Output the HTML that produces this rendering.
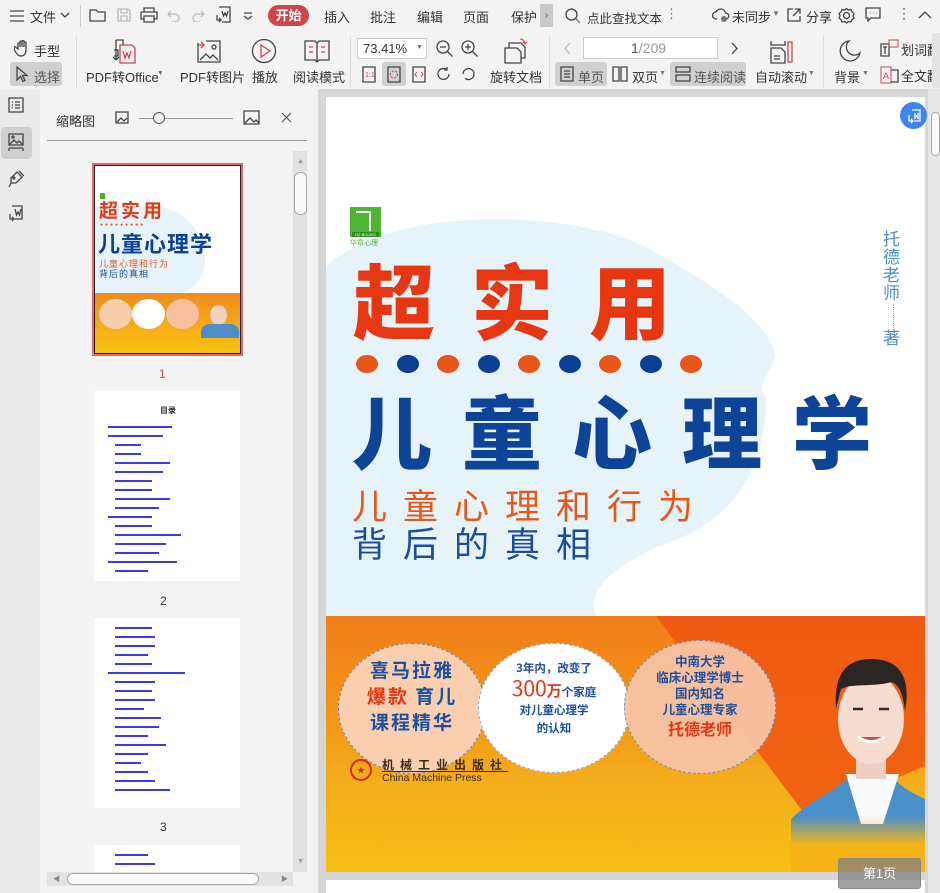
<!DOCTYPE html>
<html><head><meta charset="utf-8">
<style>
*{margin:0;padding:0;box-sizing:border-box}
body{width:940px;height:893px;overflow:hidden;background:#f3f3f3;font-family:"Liberation Sans","Noto Sans CJK SC",sans-serif;font-size:12px;color:#333;position:relative}
.a{position:absolute}
.t{white-space:nowrap}
.cjk{font-family:"Noto Sans CJK SC",sans-serif}
.ic{stroke:#444;fill:none;stroke-width:1.3}
.toc{position:absolute;height:2px;background:#3a3ae8}
</style></head><body>

<!-- top bar -->
<div class="a" style="left:0;top:0;width:940px;height:33px;background:#f3f3f3"></div>
<svg class="a" style="left:9px;top:9px" width="16" height="14"><path class="ic" d="M1 2h14M1 7h14M1 12h14"/></svg>
<div class="a t" style="left:30px;top:7px;font-size:13px">文件</div>
<svg class="a" style="left:60px;top:11px" width="10" height="8"><path class="ic" d="M1 2l4 4 4-4"/></svg>
<div class="a" style="left:80px;top:5px;width:1px;height:22px;background:#ccc"></div>
<svg class="a" style="left:89px;top:7px" width="18" height="16"><path class="ic" d="M1 3h6l2 2h7v9H1z"/></svg>
<svg class="a" style="left:116px;top:7px" width="16" height="16"><path d="M2 2h10l2 2v10H2z M5 2v4h6V2 M5 14V9h6v5" stroke="#bbb" fill="none" stroke-width="1.3"/></svg>
<svg class="a" style="left:140px;top:7px" width="18" height="16"><path class="ic" d="M4 5V1h10v4 M1 5h16v7h-3 M4 12H1V5 M4 9h10v6H4z"/></svg>
<svg class="a" style="left:167px;top:8px" width="14" height="14"><path d="M4 3L1 6l3 3 M1 6h7a4 4 0 010 8H5" stroke="#bbb" fill="none" stroke-width="1.3"/></svg>
<svg class="a" style="left:191px;top:8px" width="14" height="14"><path d="M10 3l3 3-3 3 M13 6H6a4 4 0 000 8h3" stroke="#bbb" fill="none" stroke-width="1.3"/></svg>
<svg class="a" style="left:214px;top:6px" width="18" height="18"><path class="ic" d="M5 1h11v15H8 M3 9v5h4 M5 12l2 2-2 2 M8 5l1.5 5 1.5-3 1.5 3L14 5"/></svg>
<svg class="a" style="left:243px;top:12px" width="10" height="8"><path class="ic" d="M1 1h8M1 4l4 3 4-3"/></svg>
<div class="a t" style="left:268px;top:5px;width:41px;height:21px;background:#d0454a;border-radius:11px;color:#fff;font-size:13px;text-align:center;line-height:21px;font-weight:bold">开始</div>
<div class="a t" style="left:324px;top:7px;font-size:13px">插入</div>
<div class="a t" style="left:370px;top:7px;font-size:13px">批注</div>
<div class="a t" style="left:417px;top:7px;font-size:13px">编辑</div>
<div class="a t" style="left:463px;top:7px;font-size:13px">页面</div>
<div class="a t" style="left:511px;top:7px;font-size:13px">保护</div>
<div class="a" style="left:540px;top:4px;width:13px;height:23px;background:#c8c8c8;color:#555;font-size:10px;text-align:center;line-height:23px">›</div>
<svg class="a" style="left:565px;top:8px" width="16" height="16"><circle class="ic" cx="6.5" cy="6.5" r="5.5" stroke="#777"/><path d="M10.5 10.5l4.5 4.5" stroke="#777" stroke-width="1.3"/></svg>
<div class="a t" style="left:587px;top:8px;font-size:12.5px">点此查找文本</div>
<div class="a t" style="left:665px;top:6px;font-size:13px;color:#666">⋮</div>
<svg class="a" style="left:712px;top:7px" width="18" height="16"><path class="ic" d="M5 12H4a3.5 3.5 0 010-7 5 5 0 019.5 1A3 3 0 0114 12" stroke="#555"/><circle cx="12" cy="12" r="3" fill="#777"/></svg>
<div class="a t" style="left:732px;top:7px;font-size:13px">未同步</div>
<div class="a t" style="left:772px;top:9px;font-size:8px;color:#777">▼</div>
<svg class="a" style="left:786px;top:7px" width="16" height="16"><path class="ic" d="M7 2H2v12h12V9 M9 2h5v5 M14 2L7 9"/></svg>
<div class="a t" style="left:806px;top:7px;font-size:13px">分享</div>
<svg class="a" style="left:838px;top:7px" width="17" height="17"><circle class="ic" cx="8.5" cy="8.5" r="3"/><path class="ic" d="M8.5 1.5l2 1.5 2.5-.5 1 2.5 2 1.5-1 2.5 1 2-2 1.5-1 2.5-2.5-.5-2 1.5-2-1.5-2.5.5-1-2.5-2-1.5 1-2-1-2.5 2-1.5 1-2.5 2.5.5z"/></svg>
<svg class="a" style="left:865px;top:7px" width="16" height="15"><path class="ic" d="M1 1h14v10H6l-3 3v-3H1z M5 6h.5M8 6h.5M11 6h.5"/></svg>
<div class="a t" style="left:897px;top:5px;font-size:14px;color:#555">⋮</div>
<svg class="a" style="left:918px;top:10px" width="14" height="9"><path class="ic" d="M1 8l6-6 6 6"/></svg>

<!-- toolbar row 2 -->
<svg class="a" style="left:14px;top:39px" width="18" height="18"><path class="ic" d="M4 10V5a1 1 0 012 0v3V3a1 1 0 012 0v5V2.5a1 1 0 012 0V8V4a1 1 0 012 0v7c0 4-2 6-5 6s-4-2-6-5l-1-3a1 1 0 012-.5z"/></svg>
<div class="a t" style="left:34px;top:41px;font-size:13px">手型</div>
<div class="a" style="left:10px;top:62px;width:52px;height:24px;background:#d0d0d0;border-radius:3px"></div>
<svg class="a" style="left:15px;top:66px" width="14" height="17"><path class="ic" d="M2 1v13l3.5-3.5 2.5 5 2-1-2.5-5H12z"/></svg>
<div class="a t" style="left:34px;top:67px;font-size:13px;color:#555">选择</div>
<div class="a" style="left:76px;top:36px;width:1px;height:52px;background:#ddd"></div>
<svg class="a" style="left:110px;top:38px" width="28" height="28"><path class="ic" d="M6 2h7v5 M6 2v20 M4 12h4v6H4 M3 19l3 3 3-3"/><path d="M10 7h12l3 3v15H10z M13 13l2 7 2-5 2 5 2-7" stroke="#d0454a" fill="none" stroke-width="1.3"/></svg>
<div class="a t" style="left:86px;top:67px;font-size:13px">PDF转Office</div>
<div class="a t" style="left:157px;top:70px;font-size:7px;color:#777">▼</div>
<svg class="a" style="left:196px;top:39px" width="26" height="24"><path class="ic" d="M2 4v19h22V2H10 M4 21l6-6 4 4 3-3 5 5"/><circle class="ic" cx="18" cy="8" r="2"/><path d="M1 6h7M5 3l3 3-3 3" stroke="#d0454a" fill="none" stroke-width="1.3"/></svg>
<div class="a t" style="left:180px;top:67px;font-size:13px">PDF转图片</div>
<svg class="a" style="left:251px;top:38px" width="26" height="26"><circle class="ic" cx="13" cy="13" r="11.5"/><path d="M10 7v12l9-6z" stroke="#d0454a" fill="none" stroke-width="1.3"/></svg>
<div class="a t" style="left:252px;top:67px;font-size:13px">播放</div>
<svg class="a" style="left:304px;top:39px" width="26" height="24"><path class="ic" d="M1 2h10l2 2 2-2h10v19H15l-2 2-2-2H1z M13 4v18"/><path d="M5 8h4M5 13h4M17 8h4M17 13h4" stroke="#d0454a" stroke-width="1.3"/></svg>
<div class="a t" style="left:293px;top:67px;font-size:13px">阅读模式</div>
<div class="a" style="left:350px;top:36px;width:1px;height:52px;background:#ddd"></div>
<div class="a" style="left:357px;top:38px;width:70px;height:21px;background:#fff;border:1px solid #ccc;border-radius:2px"></div>
<div class="a t" style="left:363px;top:41px;font-size:13px">73.41%</div>
<div class="a t" style="left:416px;top:44px;font-size:7px;color:#777">▼</div>
<svg class="a" style="left:436px;top:40px" width="18" height="18"><circle class="ic" cx="7" cy="7" r="6"/><path class="ic" d="M4 7h6M11.5 11.5l5 5"/></svg>
<svg class="a" style="left:461px;top:40px" width="18" height="18"><circle class="ic" cx="7" cy="7" r="6"/><path class="ic" d="M4 7h6M7 4v6M11.5 11.5l5 5"/></svg>
<svg class="a" style="left:362px;top:66px" width="14" height="17"><path class="ic" d="M1 1h12v15H1z"/><text x="3" y="11" font-size="7" fill="#d0454a">1:1</text></svg>
<div class="a" style="left:382px;top:62px;width:24px;height:24px;background:#d0d0d0;border-radius:3px"></div>
<svg class="a" style="left:387px;top:66px" width="14" height="17"><path class="ic" d="M1 1h12v15H1z"/><circle cx="7" cy="8.5" r="3.5" stroke="#d0454a" fill="none" stroke-dasharray="2 1.5"/></svg>
<svg class="a" style="left:412px;top:66px" width="14" height="17"><path class="ic" d="M1 1h12v15H1z"/><path d="M5 6L3 8.5 5 11M9 6l2 2.5L9 11" stroke="#d0454a" fill="none"/></svg>
<svg class="a" style="left:436px;top:66px" width="16" height="16"><path class="ic" d="M13 8a5.5 5.5 0 11-2-4.3 M11 1v3h-3"/></svg>
<svg class="a" style="left:460px;top:66px" width="16" height="16"><path class="ic" d="M3 8a5.5 5.5 0 112 4.3"/></svg>
<svg class="a" style="left:502px;top:38px" width="26" height="26"><path class="ic" d="M3 10h12l4 4v11H3z M7 10V5h12l4 4v11h-4"/><path d="M18 1a5 5 0 015 5 M21 4l2 2 2-2" stroke="#d0454a" fill="none"/></svg>
<div class="a t" style="left:490px;top:67px;font-size:13px">旋转文档</div>
<div class="a" style="left:549px;top:36px;width:1px;height:52px;background:#ddd"></div>
<svg class="a" style="left:563px;top:42px" width="9" height="13"><path d="M7 1L2 6.5 7 12" stroke="#bbb" fill="none" stroke-width="1.3"/></svg>
<div class="a" style="left:583px;top:37px;width:135px;height:22px;background:#fff;border:1px solid #ccc"></div>
<div class="a t" style="left:631px;top:40px;font-size:14px;color:#999"><span style="color:#555">1</span>/209</div>
<svg class="a" style="left:730px;top:42px" width="9" height="13"><path d="M2 1l5 5.5L2 12" stroke="#444" fill="none" stroke-width="1.3"/></svg>
<div class="a" style="left:555px;top:62px;width:52px;height:24px;background:#d0d0d0;border-radius:3px"></div>
<svg class="a" style="left:560px;top:66px" width="14" height="16"><path class="ic" d="M1 1h12v14H1z M4 5h6M4 8h6M4 11h6"/></svg>
<div class="a t" style="left:578px;top:67px;font-size:13px;color:#555">单页</div>
<svg class="a" style="left:612px;top:66px" width="16" height="16"><path class="ic" d="M1 1h6v14H1z M9 1h6v14H9z"/></svg>
<div class="a t" style="left:632px;top:67px;font-size:13px">双页</div>
<div class="a t" style="left:659px;top:70px;font-size:7px;color:#777">▼</div>
<div class="a" style="left:670px;top:62px;width:76px;height:24px;background:#d0d0d0;border-radius:3px"></div>
<svg class="a" style="left:675px;top:66px" width="16" height="16"><path class="ic" d="M1 1h14v5H1z M1 9h14v6H1z"/></svg>
<div class="a t" style="left:694px;top:67px;font-size:13px;color:#555">连续阅读</div>
<svg class="a" style="left:770px;top:40px" width="24" height="24"><path class="ic" d="M1 1v4h14V1 M1 8v15h14V12l-4-4z M4 16h6M4 19h6"/><rect x="18" y="2" width="4" height="20" stroke="#d0454a" fill="none" stroke-width="1.3"/></svg>
<div class="a t" style="left:755px;top:67px;font-size:13px">自动滚动</div>
<div class="a t" style="left:808px;top:70px;font-size:7px;color:#777">▼</div>
<div class="a" style="left:823px;top:36px;width:1px;height:52px;background:#ddd"></div>
<svg class="a" style="left:839px;top:40px" width="22" height="22"><path class="ic" d="M10 1a10 10 0 1011 12A8 8 0 0110 1z"/></svg>
<div class="a t" style="left:834px;top:67px;font-size:13px">背景</div>
<div class="a t" style="left:862px;top:70px;font-size:7px;color:#777">▼</div>
<svg class="a" style="left:880px;top:39px" width="20" height="18"><path class="ic" d="M1 5h8v12H1z M3 8h4M5 8v7"/><rect x="9" y="1" width="9" height="7" stroke="#d0454a" fill="none"/></svg>
<div class="a t" style="left:901px;top:40px;font-size:13px">划词翻</div>
<svg class="a" style="left:880px;top:66px" width="20" height="18"><rect x="1" y="1" width="10" height="16" stroke="#d0454a" fill="none"/><text x="3" y="13" font-size="9" fill="#d0454a">A</text><path class="ic" d="M11 4h7v12h-7"/></svg>
<div class="a t" style="left:901px;top:66px;font-size:13px">全文翻</div>
<div class="a" style="left:932px;top:33px;width:8px;height:55px;background:#e3e3e3"></div>

<!-- left icon strip -->
<div class="a" style="left:0;top:89px;width:40px;height:804px;background:#ebebeb"></div>
<svg class="a" style="left:8px;top:97px" width="16" height="16"><path class="ic" d="M1 1h14v14H1z M4 5h1M7 5h5M4 8h1M7 8h5M4 11h1M7 11h5"/></svg>
<div class="a" style="left:1px;top:127px;width:31px;height:32px;background:#cfcfcf;border-radius:4px"></div>
<svg class="a" style="left:8px;top:133px" width="16" height="20"><path class="ic" d="M1 1h14v11H1z M2 11l4-4 3 3 2-2 4 4 M1 15h14 M1 15v3M15 15v3"/><circle cx="5" cy="4" r="1" class="ic"/></svg>
<svg class="a" style="left:8px;top:170px" width="16" height="18"><path class="ic" d="M9 2l5 5-6 6H3v-5z M3 13L1 17 M7 8a1 1 0 100 .1 M11 1l5 5"/></svg>
<svg class="a" style="left:8px;top:205px" width="16" height="18"><path class="ic" d="M4 1h10v13H7 M2 9v5h4 M4 12l2 2-2 2 M7 4l1.5 6 1.5-3 1.5 3L13 4"/></svg>

<!-- sidebar -->
<div class="a" style="left:40px;top:89px;width:278px;height:804px;background:#f3f3f3"></div>
<div class="a t" style="left:56px;top:111px;font-size:13px">缩略图</div>
<svg class="a" style="left:115px;top:111px" width="14" height="13"><path class="ic" d="M1 1h12v11H1z M2 11l4-4 3 3 3-3"/></svg>
<div class="a" style="left:139px;top:118px;width:94px;height:1px;background:#999"></div>
<div class="a" style="left:153px;top:112px;width:12px;height:12px;border-radius:50%;border:1.3px solid #555;background:#f3f3f3"></div>
<svg class="a" style="left:243px;top:110px" width="17" height="15"><path class="ic" d="M1 1h15v13H1z M2 13l5-5 4 4 2-2 3 3"/></svg>
<svg class="a" style="left:281px;top:112px" width="11" height="11"><path d="M1 1l9 9M10 1l-9 9" stroke="#555" stroke-width="1.2"/></svg>
<div class="a" style="left:47px;top:140px;width:260px;height:1px;background:#999"></div>
<div class="a" style="left:293px;top:151px;width:14px;height:721px;background:#e2e2e2"></div>
<div class="a" style="left:297px;top:158px;font-size:7px;color:#999">▲</div>
<div class="a" style="left:294px;top:172px;width:13px;height:43px;background:#fafafa;border:1px solid #aaa;border-radius:6px"></div>
<div class="a" style="left:297px;top:858px;font-size:7px;color:#999">▼</div>
<div class="a" style="left:47px;top:872px;width:246px;height:14px;background:#e2e2e2"></div>
<div class="a" style="left:67px;top:873px;width:192px;height:12px;background:#fafafa;border:1px solid #aaa;border-radius:6px"></div>
<div class="a" style="left:53px;top:874px;font-size:7px;color:#888">◀</div>
<div class="a" style="left:281px;top:874px;font-size:7px;color:#888">▶</div>

<!-- thumb 1 -->
<div class="a" style="left:92px;top:163px;width:151px;height:193px;border:2px solid #e06a6d;background:#222;padding:1px">
 <div style="position:relative;width:100%;height:100%;background:#fff;overflow:hidden">
  <div class="a" style="left:0;top:40px;width:110px;height:90px;background:#e6f3fa;border-radius:0 60px 40px 0"></div>
  <div class="a" style="left:5px;top:27px;width:5px;height:6px;background:#4caf30"></div>
  <div class="a t cjk" style="left:4px;top:34px;font-size:19px;font-weight:bold;color:#e33a14;letter-spacing:3px;line-height:1">超实用</div>
  <div class="a t" style="left:5px;top:56px;font-size:5px;color:#e65a18;letter-spacing:2px">●●●●●●●●●</div>
  <div class="a t cjk" style="left:3px;top:66px;font-size:22px;font-weight:bold;color:#0d3f93;line-height:1;letter-spacing:1px">儿童心理学</div>
  <div class="a t cjk" style="left:4px;top:93px;font-size:9px;color:#e65a18;line-height:1;letter-spacing:1px">儿童心理和行为</div>
  <div class="a t cjk" style="left:4px;top:103px;font-size:9px;color:#1b4d9c;line-height:1;letter-spacing:1px">背后的真相</div>
  <div class="a" style="left:0;top:127px;width:100%;height:60px;background:linear-gradient(180deg,#f08a1c,#f5ab18 55%,#f7c313)"></div>
  <div class="a" style="left:4px;top:133px;width:33px;height:30px;border-radius:50%;background:#f8cfae"></div>
  <div class="a" style="left:37px;top:133px;width:33px;height:30px;border-radius:50%;background:#fff"></div>
  <div class="a" style="left:71px;top:133px;width:33px;height:30px;border-radius:50%;background:#f8bfa0"></div>
  <div class="a" style="left:115px;top:139px;width:17px;height:20px;border-radius:50%;background:#f1d0c2"></div>
  <div class="a" style="left:106px;top:158px;width:38px;height:14px;background:#4f8fc4;border-radius:8px 8px 0 0"></div>
 </div>
</div>
<div class="a t" style="left:159px;top:367px;font-size:12px;color:#d0454a">1</div>

<!-- thumb 2 -->
<div class="a" style="left:94px;top:391px;width:146px;height:190px;background:#fff"></div>
<div class="a t cjk" style="left:160px;top:405px;font-size:8px;font-weight:bold">目录</div>
<div class="toc" style="left:108px;top:426px;width:64px"></div>
<div class="toc" style="left:108px;top:435px;width:55px"></div>
<div class="toc" style="left:115px;top:444px;width:26px"></div>
<div class="toc" style="left:115px;top:453px;width:26px"></div>
<div class="toc" style="left:115px;top:462px;width:55px"></div>
<div class="toc" style="left:115px;top:471px;width:48px"></div>
<div class="toc" style="left:115px;top:480px;width:37px"></div>
<div class="toc" style="left:115px;top:489px;width:37px"></div>
<div class="toc" style="left:115px;top:498px;width:55px"></div>
<div class="toc" style="left:115px;top:507px;width:44px"></div>
<div class="toc" style="left:108px;top:516px;width:44px"></div>
<div class="toc" style="left:115px;top:525px;width:37px"></div>
<div class="toc" style="left:115px;top:534px;width:66px"></div>
<div class="toc" style="left:115px;top:543px;width:51px"></div>
<div class="toc" style="left:115px;top:552px;width:44px"></div>
<div class="toc" style="left:108px;top:561px;width:69px"></div>
<div class="toc" style="left:115px;top:570px;width:33px"></div>
<div class="a t" style="left:160px;top:594px;font-size:12px">2</div>

<!-- thumb 3 -->
<div class="a" style="left:94px;top:618px;width:146px;height:190px;background:#fff"></div>
<div class="toc" style="left:115px;top:627px;width:37px"></div>
<div class="toc" style="left:115px;top:636px;width:40px"></div>
<div class="toc" style="left:115px;top:645px;width:40px"></div>
<div class="toc" style="left:115px;top:654px;width:33px"></div>
<div class="toc" style="left:115px;top:663px;width:37px"></div>
<div class="toc" style="left:108px;top:672px;width:77px"></div>
<div class="toc" style="left:115px;top:681px;width:40px"></div>
<div class="toc" style="left:115px;top:690px;width:37px"></div>
<div class="toc" style="left:115px;top:699px;width:40px"></div>
<div class="toc" style="left:115px;top:708px;width:29px"></div>
<div class="toc" style="left:115px;top:717px;width:46px"></div>
<div class="toc" style="left:115px;top:726px;width:44px"></div>
<div class="toc" style="left:115px;top:735px;width:33px"></div>
<div class="toc" style="left:115px;top:744px;width:51px"></div>
<div class="toc" style="left:115px;top:753px;width:33px"></div>
<div class="toc" style="left:115px;top:762px;width:26px"></div>
<div class="toc" style="left:115px;top:771px;width:33px"></div>
<div class="toc" style="left:115px;top:780px;width:40px"></div>
<div class="toc" style="left:115px;top:789px;width:55px"></div>
<div class="a t" style="left:160px;top:820px;font-size:12px">3</div>
<div class="a" style="left:94px;top:845px;width:146px;height:27px;background:#fff"></div>
<div class="toc" style="left:115px;top:854px;width:33px"></div>
<div class="toc" style="left:115px;top:863px;width:40px"></div>

<!-- main area -->
<div class="a" style="left:318px;top:89px;width:622px;height:804px;background:#d6d6d6"></div>
<div class="a" style="left:928px;top:89px;width:12px;height:804px;background:#e8e8e8"></div>
<div class="a" style="left:931px;top:112px;width:9px;height:44px;background:#fafafa;border:1px solid #aaa;border-radius:4px"></div>

<div class="a" style="left:326px;top:97px;width:599px;height:775px;background:#fff;overflow:hidden">
 <svg class="a" style="left:0;top:0" width="599" height="520"><path d="M0 170 C60 110 240 110 320 150 C390 190 440 220 450 260 C440 280 430 290 440 300 C440 380 400 430 330 450 C290 470 260 490 270 519 L0 519 Z" fill="#e6f4fa"/></svg>
 <div class="a" style="left:24px;top:110px;width:31px;height:30px;background:#4db531"></div>
 <div class="a" style="left:30px;top:114px;width:15px;height:20px;border:2px solid #fff;border-left:none;border-bottom:none"></div>
 <div class="a" style="left:26px;top:135px;width:27px;height:5px;background:#2f8e1f;color:#fff;font-size:4px;text-align:center">HZ BOOKS</div>
 <div class="a t cjk" style="left:24px;top:141px;font-size:7px;color:#4db531">华章心理</div>
 <div class="a t cjk" style="left:27px;top:160px;font-size:82px;font-weight:900;color:#e63612;letter-spacing:36px;line-height:1">超实用</div>
 <svg class="a" style="left:30px;top:257px" width="360" height="22"><g fill="#e8561a"><ellipse cx="11" cy="10" rx="11" ry="9"/><ellipse cx="92" cy="10" rx="11" ry="9"/><ellipse cx="173" cy="10" rx="11" ry="9"/><ellipse cx="254" cy="10" rx="11" ry="9"/><ellipse cx="335" cy="10" rx="11" ry="9"/></g><g fill="#0b3f94"><ellipse cx="52" cy="10" rx="11" ry="9"/><ellipse cx="133" cy="10" rx="11" ry="9"/><ellipse cx="214" cy="10" rx="11" ry="9"/><ellipse cx="295" cy="10" rx="11" ry="9"/></g></svg>
 <div class="a t cjk" style="left:26px;top:292px;font-size:80px;font-weight:900;color:#0d4497;letter-spacing:30px;line-height:1">儿童心理学</div>
 <div class="a t cjk" style="left:26px;top:390px;font-size:35px;color:#e8561a;letter-spacing:16px;line-height:1">儿童心理和行为</div>
 <div class="a t cjk" style="left:26px;top:428px;font-size:35px;color:#1b4d9c;letter-spacing:16px;line-height:1">背后的真相</div>
 <div class="a cjk" style="left:557px;top:132px;width:20px;font-size:17px;line-height:18px;color:#4a8fc4">托<br>德<br>老<br>师</div>
 <div class="a" style="left:567px;top:207px;width:1px;height:28px;border-left:1px dotted #8ab"></div>
 <div class="a cjk" style="left:557px;top:227px;font-size:17px;color:#4a8fc4">著</div>
 <div class="a" style="left:0;top:519px;width:599px;height:256px;background:linear-gradient(180deg,#f17d18 0%,#f29418 35%,#f5ad1a 65%,#f7c016 100%)"></div>
 <svg class="a" style="left:0;top:519px" width="599" height="256"><path d="M330 0 L599 0 L599 150 L480 200 Z" fill="#ee5512" opacity=".85"/></svg>
 <div class="a" style="left:12px;top:546px;width:148px;height:131px;border-radius:50%;background:#f9cfb0;border:1.5px dashed #6a8aa8"></div>
 <div class="a" style="left:152px;top:546px;width:152px;height:130px;border-radius:50%;background:#fff;border:1.5px dashed #8aaad0"></div>
 <div class="a" style="left:298px;top:543px;width:152px;height:134px;border-radius:50%;background:#f8c3a5;border:1.5px dashed #6a8aa8;opacity:.95"></div>
 <div class="a cjk" style="left:12px;top:560px;width:148px;text-align:center;font-size:19px;font-weight:bold;line-height:26px;color:#1d4f9e;letter-spacing:2px">喜马拉雅<br><span style="color:#e63612">爆款</span> 育儿<br>课程精华</div>
 <div class="a cjk" style="left:152px;top:562px;width:152px;text-align:center;font-size:11.5px;font-weight:bold;line-height:18px;color:#1d4f9e">3年内，改变了<br><span style="color:#e63612;font-size:21px;font-weight:normal;line-height:22px">300</span><span style="color:#e63612;font-size:15px">万</span>个家庭<br>对儿童心理学<br>的认知</div>
 <div class="a cjk" style="left:298px;top:556px;width:152px;text-align:center;font-size:12.5px;font-weight:bold;line-height:16px;color:#1d4f9e">中南大学<br>临床心理学博士<br>国内知名<br>儿童心理专家<br><span style="color:#e63612;font-size:16px;line-height:22px">托德老师</span></div>
 <svg class="a" style="left:22px;top:662px" width="26" height="24"><circle cx="13" cy="11" r="10" stroke="#d02a1a" fill="none" stroke-width="2"/><text x="9" y="14" font-size="8" fill="#d02a1a">★</text></svg>
 <div class="a t cjk" style="left:56px;top:662px;font-size:12px;font-weight:bold;color:#3a2a1a;letter-spacing:6px;line-height:1;border-bottom:1px solid #3a2a1a">机械工业出版社</div>
 <div class="a t" style="left:56px;top:676px;font-size:10.5px;color:#3a2a1a;line-height:1">China Machine Press</div>
 <svg class="a" style="left:465px;top:552px" width="134" height="223">
  <defs><linearGradient id="fd" x1="0" y1="0" x2="0" y2="1"><stop offset=".75" stop-color="#f6b417" stop-opacity="0"/><stop offset=".88" stop-color="#f6b417"/></linearGradient></defs>
  <path d="M0 170 C20 150 50 140 60 125 L100 125 C110 140 125 145 134 150 L134 223 L0 223 Z" fill="#4a8fc8"/>
  <path d="M55 125 L70 175 L92 175 L108 125 Z" fill="#fafafa"/>
  <path d="M65 100 L65 130 L95 130 L95 100 Z" fill="#efcfbf"/>
  <ellipse cx="80" cy="70" rx="33" ry="45" fill="#f5dbd0"/>
  <path d="M45 60 C42 20 60 10 80 10 C110 10 120 30 114 62 C112 45 108 35 100 33 C85 38 60 34 50 40 Z" fill="#2b2624"/>
  <path d="M62 60 h10 M88 60 h10" stroke="#3a2a22" stroke-width="2.5"/>
  <path d="M67 88 q13 9 27 0" stroke="#fff" stroke-width="3" fill="#c4514a"/>
  <rect x="0" y="0" width="134" height="223" fill="url(#fd)"/>
 </svg>
</div>
<div class="a" style="left:326px;top:880px;width:599px;height:13px;background:#fff"></div>

<div class="a" style="left:900px;top:102px;width:27px;height:27px;border-radius:50%;background:#3d86f0"></div>
<svg class="a" style="left:905px;top:107px" width="18" height="18"><path d="M7 3h8v11H9 M4 8v6h4 M6 12l2 2-2 2 M10 6v5l1.5-2 1.5 2V6" stroke="#fff" fill="none" stroke-width="1.3"/></svg>

<div class="a t" style="left:838px;top:858px;width:83px;height:31px;background:rgba(130,130,130,.75);border:1px solid #888;border-radius:3px;color:#fff;text-align:center;line-height:30px;font-size:13px">第1页</div>
</body></html>
